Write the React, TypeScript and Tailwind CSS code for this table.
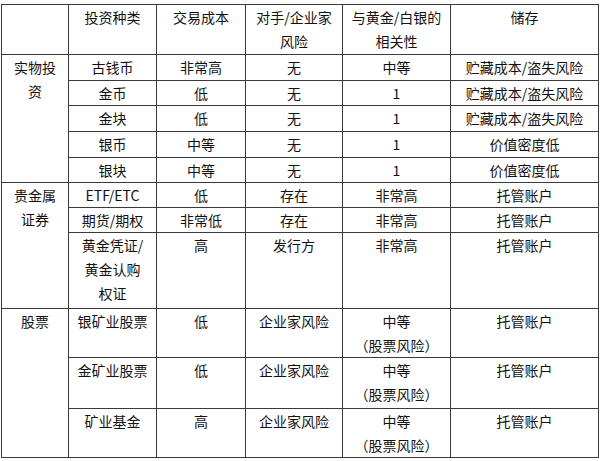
import React from "react";

const B = "border border-[#3a3a3a] align-top text-center p-0";

type Row = {
  h: number;
  cat?: { text: React.ReactNode; span: number };
  cells: React.ReactNode[];
};

const rows: Row[] = [
  { h: 26, cat: { text: <>实物投<br />资</>, span: 5 }, cells: ["古钱币", "非常高", "无", "中等", "贮藏成本/盗失风险"] },
  { h: 25, cells: ["金币", "低", "无", "1", "贮藏成本/盗失风险"] },
  { h: 26, cells: ["金块", "低", "无", "1", "贮藏成本/盗失风险"] },
  { h: 26, cells: ["银币", "中等", "无", "1", "价值密度低"] },
  { h: 25, cells: ["银块", "中等", "无", "1", "价值密度低"] },
  { h: 25, cat: { text: <>贵金属<br />证券</>, span: 3 }, cells: ["ETF/ETC", "低", "存在", "非常高", "托管账户"] },
  { h: 25, cells: ["期货/期权", "非常低", "存在", "非常高", "托管账户"] },
  { h: 76, cells: [<>黄金凭证/<br />黄金认购<br />权证</>, "高", "发行方", "非常高", "托管账户"] },
  { h: 49, cat: { text: "股票", span: 3 }, cells: ["银矿业股票", "低", "企业家风险", <>中等<br />（股票风险）</>, "托管账户"] },
  { h: 51, cells: ["金矿业股票", "低", "企业家风险", <>中等<br />（股票风险）</>, "托管账户"] },
  { h: 49, cells: ["矿业基金", "高", "企业家风险", <>中等<br />（股票风险）</>, "托管账户"] },
];

export default function App() {
  return (
    <div
      className="w-[600px] h-[461px] bg-white overflow-hidden pt-[4px] pl-[1px] text-[14px] leading-[24px] text-[#111]"
      style={{ fontFamily: '"Noto Sans CJK SC", "Noto Sans", sans-serif' }}
    >
      <table className="border-collapse table-fixed w-[597px]">
        <colgroup>
          <col className="w-[67px]" />
          <col className="w-[88px]" />
          <col className="w-[89px]" />
          <col className="w-[97px]" />
          <col className="w-[108px]" />
          <col className="w-[148px]" />
        </colgroup>
        <tbody>
          <tr className="h-[50px]">
            <td className={B}></td>
            <td className={B}>投资种类</td>
            <td className={B}>交易成本</td>
            <td className={B}>对手/企业家<br />风险</td>
            <td className={B}>与黄金/白银的<br />相关性</td>
            <td className={B}>储存</td>
          </tr>
          {rows.map((r, i) => (
            <tr key={i} style={{ height: r.h }}>
              {r.cat && (
                <td className={B} rowSpan={r.cat.span}>
                  {r.cat.text}
                </td>
              )}
              {r.cells.map((c, j) => (
                <td key={j} className={B}>
                  {c}
                </td>
              ))}
            </tr>
          ))}
        </tbody>
      </table>
    </div>
  );
}
